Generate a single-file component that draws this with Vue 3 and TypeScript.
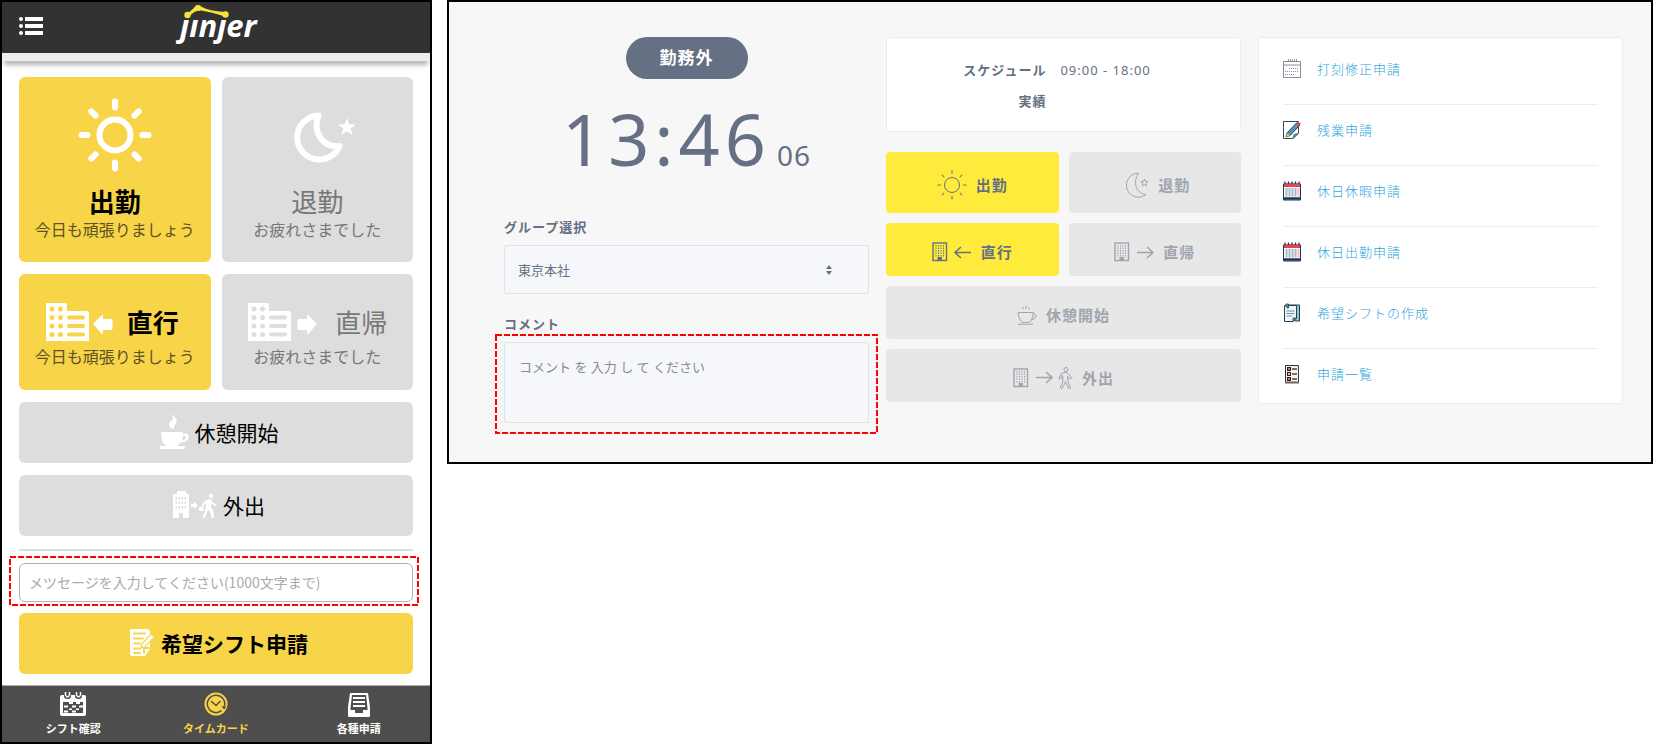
<script setup lang="ts">
import { ref } from 'vue'

interface RequestLink {
  label: string
  icon: 'board' | 'pen' | 'calendar' | 'document' | 'list'
}

const links: RequestLink[] = [
  { label: '打刻修正申請', icon: 'board' },
  { label: '残業申請', icon: 'pen' },
  { label: '休日休暇申請', icon: 'calendar' },
  { label: '休日出勤申請', icon: 'calendar' },
  { label: '希望シフトの作成', icon: 'document' },
  { label: '申請一覧', icon: 'list' },
]

const group = ref('東京本社')
const message = ref('')
const comment = ref('')
const rays = [0, 45, 90, 135, 180, 225, 270, 315]
</script>

<template>
  <div class="page">
    <section class="phone" aria-label="スマートフォン">
      <header class="phone-header">
        <button class="menu" type="button" aria-label="メニュー">
          <svg width="24" height="20" viewBox="0 0 24 20" fill="#fff">
            <g v-for="y in [1, 8, 15]" :key="y">
              <circle cx="2" :cy="y + 2" r="2" />
              <rect x="6" :y="y" width="18" height="4" />
            </g>
          </svg>
        </button>
        <svg class="logo" width="84" height="40" viewBox="0 0 84 40" role="img" aria-label="jinjer">
          <text x="6" y="33" class="logo-text">ȷınȷer</text>
          <path d="M11 10Q18 7 21.500 2Q25 0 28 3Q35 7 51 8L51 12.500Q37 8 27 6.500Q20 6 15 13Z" fill="#f5e23b" />
          <circle cx="13.500" cy="11" r="3.200" fill="#f5e23b" />
          <circle cx="24" cy="4" r="3" fill="#f5e23b" />
          <circle cx="51.500" cy="10.500" r="3.200" fill="#f5e23b" />
        </svg>
      </header>
      <div class="strip"></div>

      <main class="phone-main">
        <div class="punches">
          <button class="tile active tall" type="button">
            <svg width="76" height="76" viewBox="0 0 76 76" fill="none" stroke="#fff" stroke-width="6" stroke-linecap="round">
              <circle cx="38" cy="38" r="15.500" />
              <path v-for="r in rays" :key="r" d="M38 4.500V10.500" :transform="`rotate(${r} 38 38)`" />
            </svg>
            <strong>出勤</strong>
            <small>今日も頑張りましょう</small>
          </button>
          <button class="tile tall" type="button">
            <svg width="76" height="76" viewBox="0 0 76 76">
              <path d="M39.500 18.500A22 22 0 1 0 60.500 49C44 51 33 35 39.500 18.500Z" fill="none" stroke="#fff" stroke-width="6" stroke-linejoin="round" />
              <path d="m68 21 2.300 6.200 6.700.3-5.300 4.100 1.900 6.400-5.600-3.700-5.600 3.700 1.900-6.400-5.300-4.100 6.700-.3Z" fill="#fff" />
            </svg>
            <strong>退勤</strong>
            <small>お疲れさまでした</small>
          </button>
          <button class="tile active" type="button">
            <span class="tile-row">
              <svg width="68" height="40" viewBox="0 0 68 40">
                <path d="M1 1H20q2 0 2 2V9H42q2 0 2 2V39H1Z" fill="#fff" />
                <g class="holes">
                  <template v-for="y in [7, 15.500, 24, 32.500]" :key="y">
                    <circle cx="7" :cy="y" r="2.500" /><circle cx="15.500" :cy="y" r="2.500" />
                  </template>
                  <rect v-for="y in [13.500, 22, 30.500]" :key="y" x="22" :y="y" width="18" height="4" rx="2" />
                </g>
                <path d="m48 22 9-9q1-.6 1 1v3h8q1.500 0 1.500 1.500v8q0 1.500-1.500 1.500h-8v3q0 1.600-1 1Z" fill="#fff" />
              </svg>
              <strong>直行</strong>
            </span>
            <small>今日も頑張りましょう</small>
          </button>
          <button class="tile" type="button">
            <span class="tile-row">
              <svg width="74" height="40" viewBox="0 0 74 40">
                <path d="M1 1H20q2 0 2 2V9H42q2 0 2 2V39H1Z" fill="#fff" />
                <g class="holes">
                  <template v-for="y in [7, 15.500, 24, 32.500]" :key="y">
                    <circle cx="7" :cy="y" r="2.500" /><circle cx="15.500" :cy="y" r="2.500" />
                  </template>
                  <rect v-for="y in [13.500, 22, 30.500]" :key="y" x="22" :y="y" width="18" height="4" rx="2" />
                </g>
                <path d="m70 22-9-9q-1-.6-1 1v3h-8q-1.500 0-1.500 1.500v8q0 1.500 1.500 1.500h8v3q0 1.600 1 1Z" fill="#fff" />
              </svg>
              <strong>直帰</strong>
            </span>
            <small>お疲れさまでした</small>
          </button>
          <button class="tile bar" type="button">
            <svg width="30" height="36" viewBox="0 0 30 36" fill="#fff">
              <path d="M13 0c5 5 6 7 3.500 10-1.500 2-2 3.500-1 6-5-3-6-6-3-9.500 1.500-2 2-3.500.5-6.500Z" />
              <path d="M11 7c-2 3-1 6 2 8-1-3-1-5-2-8Z" />
              <path fill-rule="evenodd" d="M2 18H24v2q5-1.500 5.500 2 .5 6-8 6.500-1 2-3 3.500H25q1.500 0 1 2-.3 1-1.500 1H3q-3 0-2-3H7Q2 29 2 18Zm22 4-1 4.500q4-1 4-3.500-.3-2-3-1Z" />
            </svg>
            <span>休憩開始</span>
          </button>
          <button class="tile bar" type="button">
            <svg width="45" height="28" viewBox="0 0 45 28" fill="#fff">
              <path d="M5 0H14V3H17V27H11V22H7V27H1V3H5Z" />
              <g class="holes">
                <template v-for="y in [6, 10.500, 15]" :key="y">
                  <rect v-for="x in [3.500, 6.500, 9.500, 12.500]" :key="x" :x="x" :y="y" width="1.500" height="2.500" />
                </template>
              </g>
              <path d="M19 13h3v-2.500l4 4-4 4V16h-3Z" />
              <circle cx="39" cy="5" r="2.200" />
              <path d="M34 9 39 8l2 3.500 3.500 2-1 1.500-4-2-.5-1 0 4 2.500 4L42 27h-2.500l-1.500-6-2-2.500-1.500 4.500-2 4.500-2-1L33 20l1-8-2 2-1 3 1 3h-5v-4h2.500l1.500-4Z" />
            </svg>
            <span>外出</span>
          </button>
        </div>

        <hr class="divider">

        <div class="marked message">
          <input v-model="message" type="text" aria-label="メッセージ" placeholder="メツセージを入力してください(1000文字まで)">
          <svg class="marker" aria-hidden="true"><rect x="1" y="1" /></svg>
        </div>

        <button class="tile active bar shift" type="button">
          <svg width="26" height="30" viewBox="0 0 26 30">
            <path d="M2 1H18q2 0 3 2V21l-5 7H3q-2 0-2-2V2Z" fill="#fff" />
            <path d="M5 5.500H16M5 10.500H14M5 15.500H11M5 20.500H11M5 25H11M15 25V20H20" fill="none" stroke="#f8d548" stroke-width="1.800" stroke-linecap="round" />
            <path d="m12 20 1-4.500L22 6l3.500 3L16 18.500Z" fill="#fff" stroke="#f8d548" stroke-width="1.200" />
          </svg>
          <strong>希望シフト申請</strong>
        </button>
      </main>

      <nav class="tabs" aria-label="メイン">
        <a href="#shift">
          <svg width="26" height="24" viewBox="0 0 26 24">
            <path d="M2 3H24q2 0 2 2V22q0 2-2 2H2q-2 0-2-2V5Q0 3 2 3Z" fill="#fff" />
            <g fill="#4e4e4e">
              <rect x="4" y="0" width="7" height="7" rx="3" /><rect x="15" y="0" width="7" height="7" rx="3" />
              <path d="M3 10H23V21H3Z" />
            </g>
            <path d="M9 10h4v2H9zM16 10h4v2h-4zM4 13.500h4v2H4zM12 13.500h4v2h-4zM19 13.500h4v2h-4zM9 16.500h3v1.500H9zM16 16.500h3v1.500h-3zM4 18.500h4v2H4zM12 18.500h4v2h-4z" fill="#fff" />
            <path d="M5.500 0V3Q7.500 7 9.500 3V0M16.500 0V3Q18.500 7 20.500 3V0" fill="none" stroke="#fff" stroke-width="1.500" />
          </svg>
          <span>シフト確認</span>
        </a>
        <a href="#timecard" class="current" aria-current="page">
          <svg width="24" height="24" viewBox="0 0 24 24">
            <circle cx="12" cy="12" r="11.500" fill="#f8d548" />
            <path d="M20.500 14A8.700 8.700 0 1 0 17.500 18.700M7 9 12 13.500 16.500 9" fill="none" stroke="#4e4e4e" stroke-width="1.500" />
            <path d="m17.500 14 5 .5-2.500 3Z" fill="#4e4e4e" />
          </svg>
          <span>タイムカード</span>
        </a>
        <a href="#requests">
          <svg width="24" height="26" viewBox="0 0 24 26">
            <path d="M3 1H21L23 15V24q0 1-1 1H2q-1 0-1-1V15Z" fill="#fff" />
            <path d="M5 3H19L20.500 16V18H16V21H8V18H3.500V16Z" fill="#4e4e4e" />
            <path d="M6 6H18M6 10H18M6 14H18" stroke="#fff" stroke-width="2" />
          </svg>
          <span>各種申請</span>
        </a>
      </nav>
    </section>

    <section class="desk" aria-label="打刻">
      <div class="status">
        <p class="pill">勤務外</p>
        <p class="clock"><span class="time">13:46</span><span class="seconds">06</span></p>
        <label for="group">グループ選択</label>
        <div class="select-box">
          <select id="group" v-model="group">
            <option>東京本社</option>
          </select>
          <svg class="sort" width="6" height="10" viewBox="0 0 6 10" fill="#657084" aria-hidden="true">
            <path d="M0 4 3 0 6 4ZM0 6 3 10 6 6Z" />
          </svg>
        </div>
        <label for="comment">コメント</label>
        <div class="marked comment">
          <textarea id="comment" v-model="comment" placeholder="コメント を 入力 し て ください"></textarea>
          <svg class="marker" aria-hidden="true"><rect x="1" y="1" /></svg>
        </div>
      </div>

      <div class="actions">
        <dl class="schedule">
          <dt>スケジュール</dt><dd>09:00 - 18:00</dd>
          <dt>実績</dt><dd></dd>
        </dl>
        <div class="action-grid">
          <button class="action go tall" type="button">
            <svg width="30" height="30" viewBox="0 0 30 30" class="line">
              <circle cx="15" cy="15" r="7.500" />
              <path v-for="r in rays" :key="r" d="M15 .5V4" :transform="`rotate(${r} 15 15)`" />
            </svg>
            <span>出勤</span>
          </button>
          <button class="action tall" type="button">
            <svg width="30" height="26" viewBox="-7 0 30 26" class="line">
              <path d="M12.500 1.200A12 12 0 1 0 20 22.500C11 22 6 11 12.500 1.200Z" />
              <path d="m18.500 7 .9 2.300 2.600.3-2 1.700.6 2.600-2.100-1.400-2.200 1.400.6-2.600-2-1.700 2.600-.3Z" />
            </svg>
            <span>退勤</span>
          </button>
          <button class="action go" type="button">
            <svg width="40" height="20" viewBox="0 0 40 20" class="line">
              <rect x="1" y="1" width="13.500" height="17.500" stroke-width="1.400" />
              <path d="M4 3V15M6.500 3V15M9 3V15M11.500 3V15" stroke-dasharray="1.500 1" />
              <rect x="6" y="15.500" width="3.500" height="3" fill="currentColor" />
              <path d="M39 10.500H23M29 5 23 10.500 29 16" stroke-width="1.500" />
            </svg>
            <span>直行</span>
          </button>
          <button class="action" type="button">
            <svg width="40" height="20" viewBox="0 0 40 20" class="line">
              <rect x="1" y="1" width="13.500" height="17.500" stroke-width="1.400" />
              <path d="M4 3V15M6.500 3V15M9 3V15M11.500 3V15" stroke-dasharray="1.500 1" />
              <rect x="6" y="15.500" width="3.500" height="3" fill="currentColor" />
              <path d="M23 10.500H39M33 5 39 10.500 33 16" stroke-width="1.500" />
            </svg>
            <span>直帰</span>
          </button>
          <button class="action wide" type="button">
            <svg width="20" height="20" viewBox="0 0 20 20" class="line">
              <path d="M1 7.500H16.500Q16 14 12.500 17.500H5Q1.500 14 1 7.500ZM16 9.500Q19 8 19 11 18.500 14 14.500 15M1 19.300H16M6 4.500V2M9 4V.5M12 4.500V2" />
            </svg>
            <span>休憩開始</span>
          </button>
          <button class="action wide" type="button">
            <svg width="60" height="24" viewBox="0 0 60 24" class="line">
              <rect x="1" y="3" width="13.500" height="17.500" stroke-width="1.400" />
              <path d="M4 5V17M6.500 5V17M9 5V17M11.500 5V17" stroke-dasharray="1.500 1" />
              <rect x="6" y="17.500" width="3.500" height="3" fill="currentColor" />
              <path d="M23 11.500H39M33 6 39 11.500 33 17" stroke-width="1.500" />
              <circle cx="53" cy="3.500" r="2" />
              <path d="M51 6.500 48 8 46 12.500 47.500 13 49.500 9.500 50 13 49.500 17 47 21.500 49 22.500 51.500 18 52.500 15.500 55.500 22.500 57.500 22 55 15 54.500 10.500 58 13 59 11.500 55.500 8 53.500 6.500Z" />
            </svg>
            <span>外出</span>
          </button>
        </div>
      </div>

      <ul class="links">
        <li v-for="link in links" :key="link.label">
          <svg width="18" height="20" viewBox="0 0 18 20" aria-hidden="true">
            <g v-if="link.icon === 'board'" fill="none" stroke="#8b8f9b">
              <rect x=".5" y="2.500" width="17" height="16" />
              <path d="M0 6H18" />
              <path d="M5 1.500H14" stroke-width="2.500" stroke-dasharray="1 1" />
              <path d="M6 9.500H16M2 12.500H16M2 15.500H12" stroke-dasharray="1 1" />
            </g>
            <g v-else-if="link.icon === 'pen'">
              <path d="M.5 1.500H15.500V13L10 18.500H.5Z" fill="#fff" stroke="#2a4b66" />
              <path d="M10 18.500 11 14.500 15 13.500Z" fill="#58b8b0" stroke="#2a4b66" stroke-width=".7" />
              <path d="m3 17 1-4L14 2.500l3 2.500L7 15.500Z" fill="#5b8fc0" stroke="#223c55" />
              <path d="m13 3.500 2-2 3 2.500-2 2Z" fill="#e4434c" />
              <path d="m3 17 1-4 3 2.500Z" fill="#f0bd5b" />
            </g>
            <g v-else-if="link.icon === 'calendar'">
              <path d="M.5 3H17.500V19H.5Z" fill="#fff" stroke="#1c3a57" />
              <path d="M1 2.500H17V6H1Z" fill="#e0484d" />
              <path d="M2 3V.5M5.500 3V.5M9 3V.5M12.500 3V.5M16 3V.5" stroke="#1c3a57" stroke-width="1.300" />
              <path d="M3.500 7V15.500M6.500 7V15.500M9.500 7V15.500M12.500 7V15.500" stroke="#aab8c8" stroke-width="2" />
              <path d="M15.500 7V15.500" stroke="#f7b9b9" stroke-width="2" />
              <path d="M0 17.500H18" stroke="#1c3a57" stroke-width="2.500" />
            </g>
            <g v-else-if="link.icon === 'document'">
              <path d="M4 2H16.500V18H12Z" fill="#8ccdca" stroke="#243e54" />
              <path d="M1.500 2.500H13.500V15L10 18.500H1.500Z" fill="#eef6f8" stroke="#243e54" />
              <path d="M3.500 8H11.500M3.500 10.500H11.500M3.500 13H9" stroke="#7b8e9f" stroke-width="1.200" />
              <path d="M3 4V1H5.500V5H4V3M10 18.500V15H13.500Z" fill="#58aaa8" stroke="#243e54" stroke-width=".8" />
            </g>
            <g v-else>
              <path d="M2.500 1.500H15.500V18.500H2.500Z" fill="#fbf4e6" stroke="#343434" />
              <path d="M2 18.500H16" stroke="#666" stroke-width="2" />
              <path d="M4 3h4v4H4zM4 8h4v4H4zM4 13h4v4H4z" fill="#222" />
              <path d="M5 4h2v2H5zM5 14h2v2H5z" fill="#f06b55" />
              <path d="M5 9h2v2H5z" fill="#ccc" />
              <path d="M9 5H14M9 10H14M9 15H14" stroke="#444" stroke-width="1.300" />
            </g>
          </svg>
          <a href="#request">{{ link.label }}</a>
        </li>
      </ul>
    </section>
  </div>
</template>

<style>
body {
  margin: 0;
  background: #fff;
}
</style>

<style scoped>
* {
  box-sizing: border-box;
}

.page {
  display: grid;
  grid-template-columns: 432fr 1206fr;
  gap: 15px;
  align-items: start;
  font-family: "Noto Sans", "Noto Sans CJK JP", sans-serif;
  color: #657084;
}

button {
  border: 0;
  padding: 0;
  font-family: inherit;
  cursor: pointer;
}

svg {
  flex: none;
}

/* Smartphone screen */
.phone {
  border: 2px solid #000;
  background: #fff;
  font-family: "Noto Sans CJK JP", sans-serif;
}

.phone-header {
  display: grid;
  grid-template-columns: 1fr auto 1fr;
  align-items: center;
  height: 51px;
  background: #323232;
}

.menu {
  justify-self: start;
  display: flex;
  margin: 0 0 4px 17px;
  background: none;
}

.logo {
  margin-bottom: 8px;
  overflow: visible;
}

.logo-text {
  font: italic 700 31px "Open Sans", "Noto Sans", sans-serif;
  fill: #fff;
}

.strip {
  height: 8px;
  background: #eee;
  box-shadow: 0 5px 5px -2px rgba(0, 0, 0, 0.45);
}

.phone-main {
  padding: 16px 17px 11px;
}

.punches {
  display: grid;
  grid-template-columns: 1fr 1fr;
  gap: 12px 11px;
}

.tile {
  display: flex;
  flex-direction: column;
  align-items: center;
  min-height: 116px;
  padding-top: 28px;
  border-radius: 6px;
  background: #ddd;
  color: #777;
  font-size: 26px;
  line-height: 40px;
}

.tile.tall {
  min-height: 185px;
  padding-top: 20px;
}

.tile.tall strong {
  margin-top: 8px;
  line-height: 39px;
}

.tile strong {
  font-weight: 400;
}

.tile small {
  font-size: 16px;
  line-height: 18px;
}

.tile > .tile-row + small {
  margin-top: 5px;
}

.tile.active {
  background: #f8d548;
  color: #000;
}

.tile.active strong {
  font-weight: 700;
}

.tile.active small {
  color: #5d5226;
}

.tile-row {
  display: flex;
  align-items: center;
  gap: 14px;
}

.active .tile-row {
  padding-right: 6px;
}

.holes {
  fill: #ddd;
}

.active .holes {
  fill: #f8d548;
}

.tile.bar {
  grid-column: 1 / -1;
  flex-direction: row;
  justify-content: center;
  gap: 6px;
  width: 100%;
  min-height: 61px;
  padding: 0 0 2px 5px;
  color: #000;
  font-size: 21px;
}

.divider {
  height: 2px;
  margin: 13px 0 12px;
  border: 0;
  background: #ddd;
}

.marked {
  position: relative;
}

.marker {
  position: absolute;
  pointer-events: none;
}

.marker rect {
  width: calc(100% - 2px);
  height: calc(100% - 2px);
  fill: none;
  stroke: #f00;
  stroke-width: 2px;
  stroke-dasharray: 6 2;
}

.message .marker {
  top: -7px;
  left: -10px;
  width: calc(100% + 16px);
  height: calc(100% + 11px);
}

.message input {
  display: block;
  width: 100%;
  height: 39px;
  padding: 0 9px 2px;
  border: 1px solid #b3b3b3;
  border-radius: 6px;
  background: #fff;
  font-family: inherit;
  font-size: 14px;
}

.message input::placeholder {
  color: #aaa;
}

.shift {
  margin-top: 11px;
}

.tabs {
  display: grid;
  grid-template-columns: repeat(3, 1fr);
  border-top: 1px solid #aaa;
  background: #4e4e4e;
}

.tabs a {
  display: flex;
  flex-direction: column;
  align-items: center;
  justify-content: space-between;
  height: 56px;
  padding: 6px 0;
  color: #fff;
  font-size: 11px;
  font-weight: 700;
  line-height: 16px;
  text-decoration: none;
}

.tabs .current {
  color: #f8d548;
}

/* Desktop screen */
.desk {
  display: grid;
  grid-template-columns: 365fr 355fr 365fr;
  gap: 17px;
  align-items: start;
  padding: 35px 28px 39px 55px;
  border: 2px solid #000;
  background: #f7f7f7;
  font-size: 13px;
  letter-spacing: 1px;
}

.status {
  display: flex;
  flex-direction: column;
}

.pill {
  align-self: center;
  margin: 0;
  padding: 0 34px;
  border-radius: 21px;
  background: #657084;
  color: #fff;
  font-size: 17px;
  font-weight: 700;
  line-height: 42px;
}

.clock {
  display: flex;
  align-items: baseline;
  justify-content: center;
  gap: 6px;
  margin: 11px 0 14px;
  line-height: 96px;
}

.time {
  font-size: 72px;
  letter-spacing: 5px;
}

.seconds {
  font-size: 28px;
}

.status label {
  margin-bottom: 8px;
  font-weight: 700;
  line-height: 20px;
}

.select-box {
  position: relative;
  margin-bottom: 20px;
}

select,
textarea {
  display: block;
  width: 100%;
  border: 1px solid #dfe3ec;
  border-radius: 2px;
  background: #f5f7fb;
  color: #657084;
  font-family: inherit;
  font-size: 13px;
}

select {
  appearance: none;
  height: 49px;
  padding: 0 13px;
}

.sort {
  position: absolute;
  top: 20px;
  right: 37px;
  pointer-events: none;
}

textarea {
  height: 81px;
  padding: 14px;
  line-height: 20px;
  letter-spacing: 0;
  resize: none;
}

textarea::placeholder {
  color: #858a92;
}

.comment .marker {
  top: -8px;
  left: -9px;
  width: calc(100% + 18px);
  height: calc(100% + 19px);
}

.schedule {
  display: grid;
  grid-template-columns: 166fr 187fr;
  gap: 11px 14px;
  margin: 0 0 20px;
  padding: 22px 0 20px;
  border: 1px solid #ececec;
  border-radius: 3px;
  background: #fff;
  line-height: 20px;
}

.schedule dt {
  font-weight: 700;
  text-align: right;
}

.schedule dd {
  margin: 0;
}

.action-grid {
  display: grid;
  grid-template-columns: 1fr 1fr;
  gap: 10px;
}

.action {
  display: flex;
  align-items: center;
  justify-content: center;
  gap: 9px;
  min-height: 53px;
  padding-top: 4px;
  border-radius: 4px;
  background: #e7e7e7;
  color: #a0a4af;
  font-size: 15px;
  font-weight: 700;
  letter-spacing: 1px;
}

.action.tall {
  min-height: 61px;
}

.action.wide {
  grid-column: 1 / -1;
}

.action.go {
  background: #ffeb3b;
  color: #657084;
}

.line {
  fill: none;
  stroke: currentColor;
}

.links {
  margin: 0;
  padding: 6px 24px 0;
  border: 1px solid #ececec;
  border-radius: 3px;
  background: #fff;
  list-style: none;
}

.links li {
  display: flex;
  gap: 16px;
  padding: 15px 0 25px;
  border-bottom: 1px solid #ececec;
  line-height: 20px;
}

.links li:last-child {
  padding-bottom: 19px;
  border-bottom: 0;
}

.links a {
  color: #2ea6de;
  font-weight: 300;
  text-decoration: none;
}
</style>
